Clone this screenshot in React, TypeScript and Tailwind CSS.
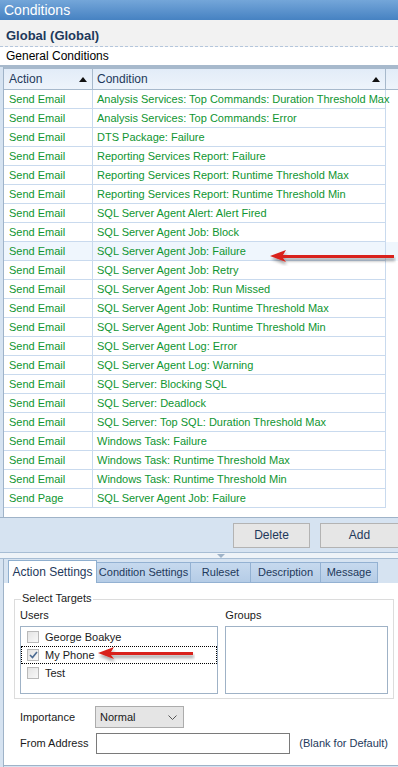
import React from 'react';

const rows: [string, string][] = [
  ['Send Email', 'Analysis Services: Top Commands: Duration Threshold Max'],
  ['Send Email', 'Analysis Services: Top Commands: Error'],
  ['Send Email', 'DTS Package: Failure'],
  ['Send Email', 'Reporting Services Report: Failure'],
  ['Send Email', 'Reporting Services Report: Runtime Threshold Max'],
  ['Send Email', 'Reporting Services Report: Runtime Threshold Min'],
  ['Send Email', 'SQL Server Agent Alert: Alert Fired'],
  ['Send Email', 'SQL Server Agent Job: Block'],
  ['Send Email', 'SQL Server Agent Job: Failure'],
  ['Send Email', 'SQL Server Agent Job: Retry'],
  ['Send Email', 'SQL Server Agent Job: Run Missed'],
  ['Send Email', 'SQL Server Agent Job: Runtime Threshold Max'],
  ['Send Email', 'SQL Server Agent Job: Runtime Threshold Min'],
  ['Send Email', 'SQL Server Agent Log: Error'],
  ['Send Email', 'SQL Server Agent Log: Warning'],
  ['Send Email', 'SQL Server: Blocking SQL'],
  ['Send Email', 'SQL Server: Deadlock'],
  ['Send Email', 'SQL Server: Top SQL: Duration Threshold Max'],
  ['Send Email', 'Windows Task: Failure'],
  ['Send Email', 'Windows Task: Runtime Threshold Max'],
  ['Send Email', 'Windows Task: Runtime Threshold Min'],
  ['Send Page', 'SQL Server Agent Job: Failure'],
];

const tabs: [string, string][] = [
  ['Action Settings', 'w-[89px]'],
  ['Condition Settings', 'w-[94px]'],
  ['Ruleset', 'w-[60px]'],
  ['Description', 'w-[70px]'],
  ['Message', 'w-[57px]'],
];

const users = [
  { name: 'George Boakye', checked: false },
  { name: 'My Phone', checked: true },
  { name: 'Test', checked: false },
];

function RedArrow({ width }: { width: number }) {
  return (
    <svg width={width} height={16} viewBox={`0 0 ${width} 16`} className="absolute pointer-events-none">
      <defs>
        <filter id="sh" x="-10%" y="-50%" width="120%" height="220%">
          <feDropShadow dx="1" dy="3" stdDeviation="1.5" floodColor="#000" floodOpacity="0.35" />
        </filter>
      </defs>
      <g filter="url(#sh)">
        <polygon points={`0,6 16,0 13,5 ${width - 2},5 ${width - 2},8 13,8 16,12`} fill="#d9231b" />
      </g>
    </svg>
  );
}

function SortUp() {
  return (
    <svg width="8" height="5" viewBox="0 0 8 5">
      <polygon points="4,0 8,5 0,5" fill="#111" />
    </svg>
  );
}

export default function App() {
  return (
    <div
      className="w-[398px] h-[767px] overflow-hidden bg-[#d6e3f1] text-[11px] leading-none whitespace-nowrap"
      style={{ fontFamily: '"Liberation Sans", Arial, sans-serif' }}
    >
      {/* title */}
      <div className="h-[20px] flex items-center px-[4px] bg-gradient-to-b from-[#74a6d9] to-[#4682c2] text-white text-[14px]">
        Conditions
      </div>
      <div className="h-[27px] bg-[#f2f2f2] px-[6px] pt-[9px] border-b border-dashed border-[#b4c6dc]">
        <span className="font-bold text-[13px] text-[#1e395b]">Global (Global)</span>
      </div>
      <div className="h-[20px] bg-white flex items-center px-[6px] text-black text-[12px] border-b-2 border-[#a7b9cc]">
        General Conditions
      </div>

      {/* table */}
      <div className="ml-[3px] border-l border-[#9fb3c8] bg-white">
        <div className="h-[23px] flex border-t-2 border-b border-[#a7b9cc] bg-gradient-to-b from-[#e2ecf8] to-[#eef4fb] text-[#1e395b] text-[12px]">
          <div className="w-[89px] border-r border-[#a7b9cc] flex items-center justify-between pl-[5px] pr-[5px]">
            <span>Action</span>
            <SortUp />
          </div>
          <div className="w-[293px] border-r border-[#a7b9cc] flex items-center justify-between pl-[4px] pr-[5px]">
            <span>Condition</span>
            <SortUp />
          </div>
        </div>
        <div className="h-[427px] relative">
          {rows.map(([a, c], i) => (
            <div key={i} className={`h-[19px] flex text-[#0f9531] ${i === 8 ? 'bg-[#eff6fd]' : ''}`}>
              <div className="w-[89px] border-r border-b border-[#c9daee] flex items-center pl-[5px]">{a}</div>
              <div className="w-[293px] border-r border-b border-[#c9daee] flex items-center pl-[4px]">{c}</div>
            </div>
          ))}
          <div className="absolute left-[266px] top-[160px]">
            <RedArrow width={126} />
          </div>
        </div>
      </div>

      {/* buttons */}
      <div className="h-[35px] border-t border-[#9fb3c8] flex items-center justify-end gap-[10px] pl-[3px]">
        <div className="w-[77px] h-[25px] bg-[#e6e6e6] border border-[#b3b3b3] flex items-center justify-center text-[#1e395b] text-[12px]">
          Delete
        </div>
        <div className="w-[78px] h-[25px] bg-[#e6e6e6] border border-r-0 border-[#b3b3b3] flex items-center justify-center text-[#1e395b] text-[12px]">
          Add
        </div>
      </div>

      {/* splitter */}
      <div className="h-[7px] border-t border-b border-[#a7bdd4] bg-[#eef3f8] flex justify-center">
        <svg width="8" height="5" viewBox="0 0 8 5" className="mt-[1px] ml-[44px]">
          <polygon points="0,0 8,0 4,4" fill="#9fb3c8" />
        </svg>
      </div>

      {/* tabs */}
      <div className="ml-[3px] border-l border-[#9fb3c8]">
        <div className="h-[24px] flex items-end pl-[4px]">
          {tabs.map(([t, w], i) =>
            i === 0 ? (
              <div key={t} className={`${w} h-[23px] bg-white border border-b-0 border-[#8fafcf] flex items-center justify-center text-[#1e395b] text-[12px]`}>
                {t}
              </div>
            ) : (
              <div key={t} className={`${w} h-[21px] bg-gradient-to-b from-[#c6d9ee] to-[#b5cce6] border border-l-0 border-[#93b1d2] flex items-center justify-center text-[#1e395b]`}>
                {t}
              </div>
            )
          )}
        </div>

        {/* panel */}
        <div className="h-[182px] bg-white pt-[10px] px-[10px] text-[#1a1a1a]">
          <div className="relative border border-[#dcdcdc] w-[380px] h-[100px] mt-[6px] px-[5px] pt-[10px]">
            <span className="absolute -top-[7px] left-[6px] bg-white px-[1px]">Select Targets</span>
            <div className="flex gap-[7px]">
              <div className="w-[200px]">
                <div className="mb-[4px] h-[12px]">Users</div>
                <div className="h-[68px] border border-[#9fb2c6] pt-[1px] relative">
                  {users.map((u) => (
                    <div
                      key={u.name}
                      className={`h-[18px] flex items-center gap-[6px] pl-[5px] ${u.checked ? 'border border-dotted border-black' : 'border border-transparent'}`}
                    >
                      <div className="w-[12px] h-[12px] border border-[#b9b9b9] bg-gradient-to-br from-[#e4e4e4] to-[#f8f8f8] flex items-center justify-center">
                        {u.checked && (
                          <svg width="9" height="8" viewBox="0 0 9 8">
                            <path d="M1 4 L3.5 6.5 L8 1" stroke="#4a6a92" strokeWidth="1.6" fill="none" />
                          </svg>
                        )}
                      </div>
                      <span>{u.name}</span>
                    </div>
                  ))}
                  <div className="absolute left-[77px] top-[20px]">
                    <RedArrow width={97} />
                  </div>
                </div>
              </div>
              <div className="w-[164px]">
                <div className="mb-[4px] h-[12px]">Groups</div>
                <div className="h-[68px] border border-[#9fb2c6]" />
              </div>
            </div>
          </div>

          <div className="mt-[7px] pl-[6px] flex items-center h-[22px]">
            <span className="w-[75px]">Importance</span>
            <div className="w-[89px] h-[22px] bg-[#e5e5e5] border border-[#acacac] flex items-center justify-between pl-[4px] pr-[6px]">
              <span>Normal</span>
              <svg width="9" height="5" viewBox="0 0 9 5">
                <path d="M0.5 0.5 L4.5 4.5 L8.5 0.5" stroke="#555" fill="none" />
              </svg>
            </div>
          </div>
          <div className="mt-[5px] pl-[6px] flex items-center h-[21px]">
            <span className="w-[76px]">From Address</span>
            <div className="w-[196px] h-[21px] border border-[#7a7a7a] bg-white" />
            <span className="ml-[9px] text-[#1e395b]">(Blank for Default)</span>
          </div>
        </div>
        <div className="h-[3px] border-t border-[#9fb3c8]" />
      </div>
    </div>
  );
}
